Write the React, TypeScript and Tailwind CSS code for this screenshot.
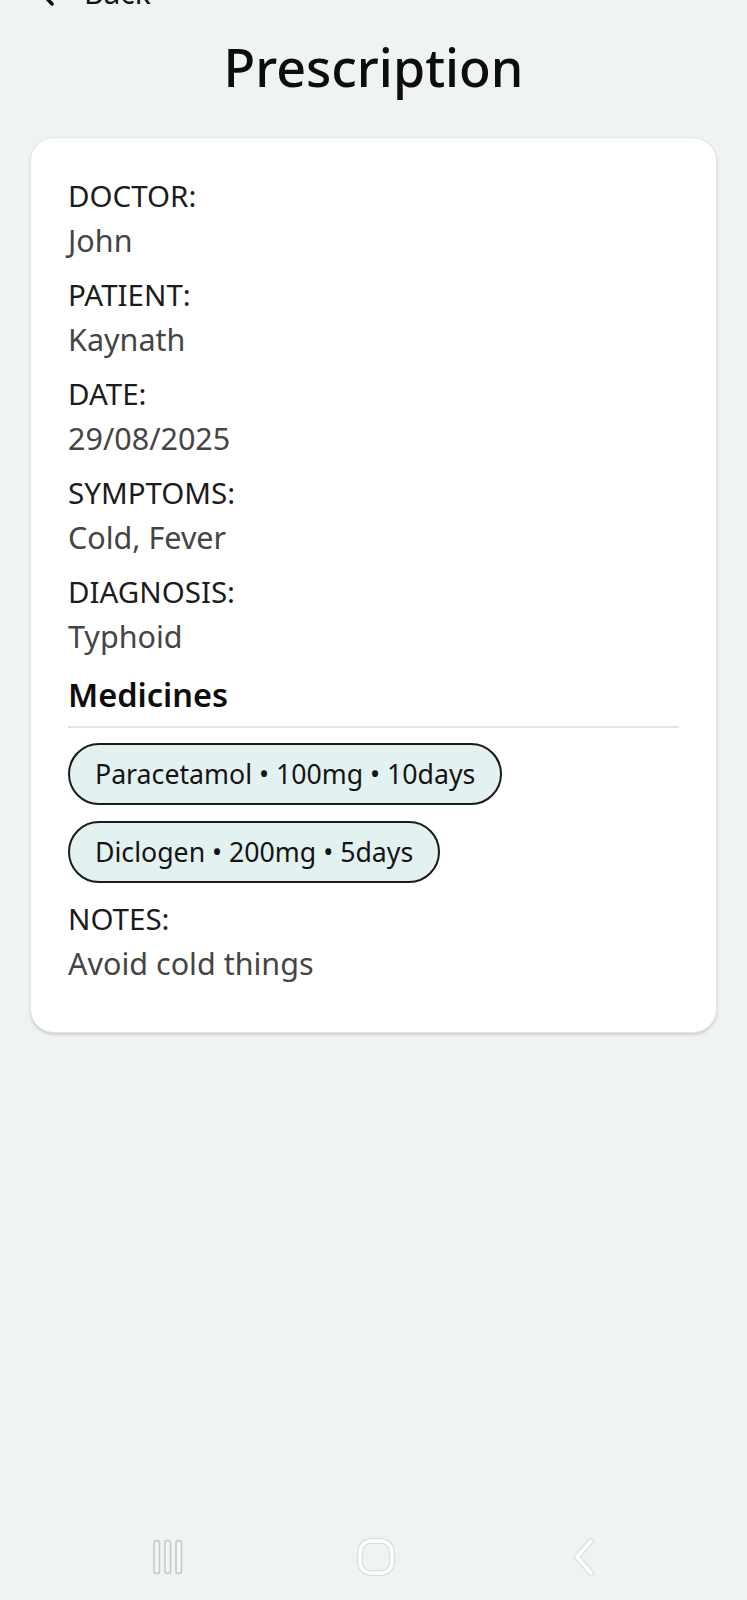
import React from "react";

const fields: { label: string; value: string }[] = [
  { label: "DOCTOR:", value: "John" },
  { label: "PATIENT:", value: "Kaynath" },
  { label: "DATE:", value: "29/08/2025" },
  { label: "SYMPTOMS:", value: "Cold, Fever" },
  { label: "DIAGNOSIS:", value: "Typhoid" },
];

const medicines = ["Paracetamol • 100mg • 10days", "Diclogen • 200mg • 5days"];

function Field({ label, value, last }: { label: string; value: string; last?: boolean }) {
  return (
    <div className={last ? "" : "mb-[9px]"}>
      <div className="text-[29.5px] leading-[45px] text-[#1c1c1c]">{label}</div>
      <div className="text-[30.5px] leading-[45px] text-[#454545]">{value}</div>
    </div>
  );
}

export default function App() {
  return (
    <div
      className="min-h-[1600px] w-full bg-[#eff3f2] flex flex-col overflow-hidden"
      style={{ fontFamily: '"Noto Sans", "Open Sans", sans-serif' }}
    >
      {/* Back row (clipped at top) */}
      <div className="-mt-[25px] flex items-center h-[36px] pl-[38px]">
        <svg width="18" height="30" viewBox="0 0 18 30" className="mr-[28px]">
          <path d="M14 4 L4 15 L14 26" fill="none" stroke="#111" strokeWidth="3.5" strokeLinecap="round" strokeLinejoin="round" />
        </svg>
        <span className="text-[30px] leading-[36px] text-[#111]">Back</span>
      </div>

      {/* Title */}
      <h1 className="mt-[24px] text-center text-[52px] leading-[64px] font-medium text-[#0d0d0d]">
        Prescription
      </h1>

      {/* Card */}
      <div className="mt-[38px] mx-[30px] rounded-[24px] bg-white border border-[#e2e6e5] shadow-[0_2px_3px_rgba(0,0,0,0.14)] pt-[35px] pb-[46px] px-[37px]">
        {fields.map((f) => (
          <Field key={f.label} label={f.label} value={f.value} />
        ))}

        <div className="mt-[16px] text-[32.5px] leading-[40px] font-semibold text-[#0d0d0d]">Medicines</div>
        <div className="mt-[11px] h-[2px] bg-[#e1e5e5]" />

        <div className="mt-[15px] flex flex-col items-start gap-[16px]">
          {medicines.map((m) => (
            <div
              key={m}
              className="rounded-full border-2 border-[#1a1a1a] bg-[#e3f1f1] px-[25px] text-[26.7px] leading-[58px] text-[#141414] whitespace-nowrap"
            >
              {m}
            </div>
          ))}
        </div>

        <div className="mt-[13px]">
          <Field label="NOTES:" value="Avoid cold things" last />
        </div>
      </div>

      <div className="flex-1" />

      {/* System navigation bar */}
      <div className="h-[86px] flex items-center pl-[147px]">
        <div className="w-[40px] flex justify-center">
          <svg width="36" height="36" viewBox="0 0 36 36">
            {[5, 16, 27].map((x) => (
              <rect key={x} x={x} y={1.5} width={5.5} height={33} rx={2.5} fill="#f4f6f6" stroke="#c6c8c8" strokeWidth="1.5" />
            ))}
          </svg>
        </div>
        <div className="w-[40px] ml-[169px] flex justify-center">
          <svg width="40" height="40" viewBox="0 0 40 40">
            <rect x="4" y="4" width="32" height="32" rx="11" fill="none" stroke="#dcdede" strokeWidth="6" />
            <rect x="4" y="4" width="32" height="32" rx="11" fill="none" stroke="#ffffff" strokeWidth="3.5" />
          </svg>
        </div>
        <div className="w-[40px] ml-[169px] flex justify-center">
          <svg width="28" height="40" viewBox="0 0 28 40">
            <path d="M20 4 L6 20 L20 36" fill="none" stroke="#dcdede" strokeWidth="6" strokeLinecap="round" strokeLinejoin="round" />
            <path d="M20 4 L6 20 L20 36" fill="none" stroke="#ffffff" strokeWidth="3.5" strokeLinecap="round" strokeLinejoin="round" />
          </svg>
        </div>
      </div>
    </div>
  );
}
